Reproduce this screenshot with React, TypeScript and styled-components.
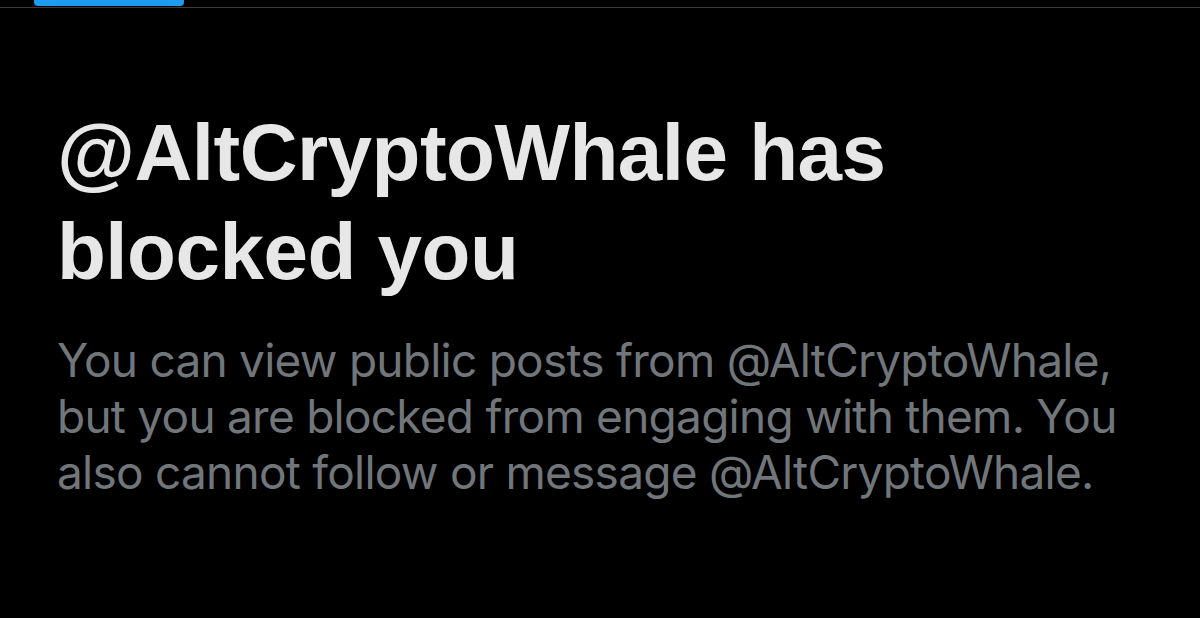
import React from "react";
import styled, { createGlobalStyle } from "styled-components";

const Global = createGlobalStyle`
  html, body { margin: 0; padding: 0; background: #000; }
  body { width: 1200px; height: 618px; overflow: hidden; }
`;

const Page = styled.div`
  width: 1200px;
  height: 618px;
  background: #000;
  display: flex;
  flex-direction: column;
`;

const TabBar = styled.div`
  height: 7px;
  border-bottom: 1px solid #3b3b3b;
  padding-left: 34px;
  display: flex;
  align-items: flex-start;
`;

const ActiveIndicator = styled.div`
  width: 150px;
  height: 6px;
  background: #1d9bf0;
  border-radius: 0 0 4px 4px;
`;

const Content = styled.div`
  padding: 95px 0 0 57px;
  display: flex;
  flex-direction: column;
`;

const Title = styled.h1`
  margin: 0;
  font-family: "Liberation Sans", Arial, sans-serif;
  font-weight: 700;
  font-size: 80px;
  line-height: 99px;
  color: #e7e7e7;
  letter-spacing: -0.5px;
`;

const Body = styled.p`
  margin: 31px 0 0 0;
  font-family: Inter, "Noto Sans", sans-serif;
  font-weight: 400;
  font-size: 46px;
  line-height: 56px;
  letter-spacing: -0.75px;
  color: #71767b;
  width: 1120px;
`;

export default function App() {
  return (
    <>
      <Global />
      <Page>
        <TabBar>
          <ActiveIndicator />
        </TabBar>
        <Content>
          <Title>
            @AltCryptoWhale has
            <br />
            blocked you
          </Title>
          <Body>
            You can view public posts from @AltCryptoWhale,
            <br />
            but you are blocked from engaging with them. You
            <br />
            also cannot follow or message @AltCryptoWhale.
          </Body>
        </Content>
      </Page>
    </>
  );
}
